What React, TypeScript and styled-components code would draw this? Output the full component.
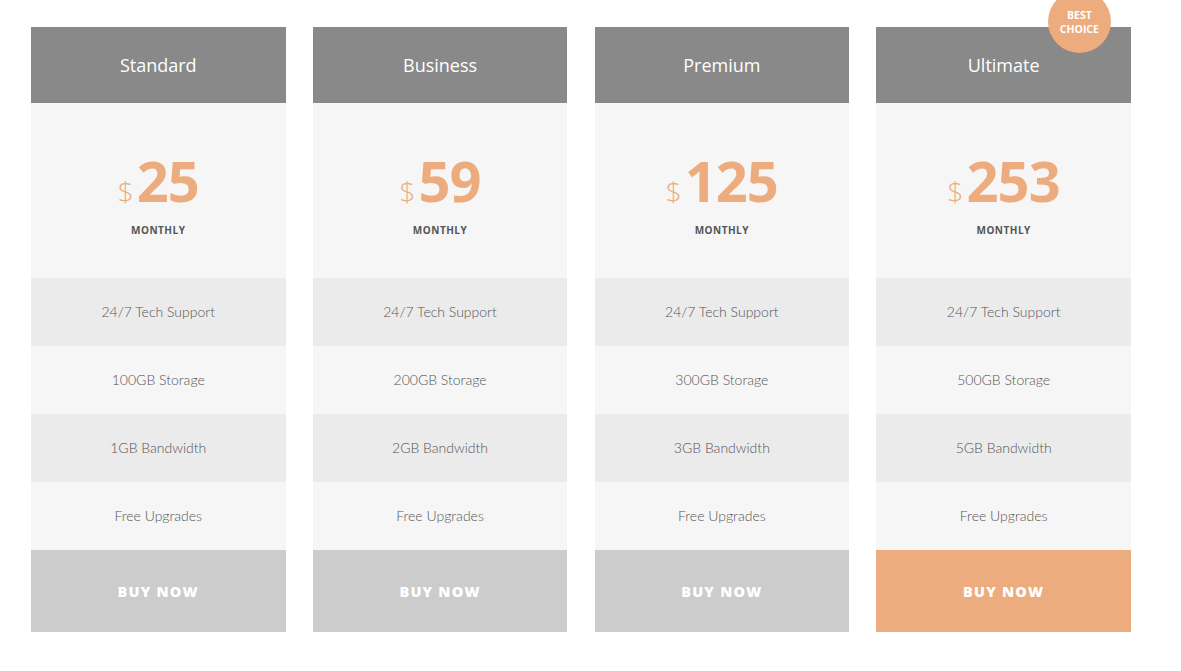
import React from "react";
import styled, { createGlobalStyle } from "styled-components";

const Global = createGlobalStyle`
  html, body { margin: 0; padding: 0; background: #ffffff; }
  body { font-family: "Open Sans", "Liberation Sans", sans-serif; }
`;

const Page = styled.div`
  padding: 27px 0 0 31px;
`;

const Grid = styled.div`
  display: grid;
  grid-template-columns: repeat(4, 254.5px);
  column-gap: 27.3px;
  width: 1100px;
`;

const Card = styled.div`
  position: relative;
  display: flex;
  flex-direction: column;
`;

const Header = styled.div`
  height: 76px;
  background: #898989;
  color: #ffffff;
  display: flex;
  align-items: center;
  justify-content: center;
  font-family: "Open Sans", sans-serif;
  font-size: 18px;
  font-weight: 400;
`;

const Badge = styled.div`
  position: absolute;
  top: -37px;
  right: 20px;
  width: 63px;
  height: 63px;
  border-radius: 50%;
  background: #ecac7e;
  color: #ffffff;
  display: flex;
  align-items: center;
  justify-content: center;
  text-align: center;
  font-family: "Open Sans", sans-serif;
  font-weight: 700;
  font-size: 10.5px;
  line-height: 14px;
  padding-top: 1px;
  box-sizing: border-box;
`;

const PriceBox = styled.div`
  height: 175px;
  background: #f6f6f6;
  display: flex;
  flex-direction: column;
  align-items: center;
  justify-content: center;
  padding-top: 4px;
  box-sizing: border-box;
`;

const Price = styled.div`
  display: flex;
  align-items: baseline;
  color: #ecac7e;
  height: 62px;
`;

const Dollar = styled.span`
  font-family: "Open Sans", sans-serif;
  font-weight: 300;
  font-size: 28px;
  margin-right: 3px;
`;

const Amount = styled.span`
  font-family: "Open Sans", sans-serif;
  font-weight: 700;
  font-size: 56px;
  letter-spacing: -1px;
  line-height: 62px;
`;

const Period = styled.div`
  margin-top: 12px;
  font-family: "Open Sans", sans-serif;
  font-weight: 700;
  font-size: 10px;
  letter-spacing: 0.5px;
  color: #555555;
`;

const Feature = styled.div<{ $alt: boolean }>`
  height: 68px;
  background: ${(p) => (p.$alt ? "#ebebeb" : "#f6f6f6")};
  display: flex;
  align-items: center;
  justify-content: center;
  padding-bottom: 2px;
  box-sizing: border-box;
  font-family: "Lato", sans-serif;
  font-weight: 300;
  font-size: 14px;
  color: #555555;
`;

const Button = styled.div<{ $active: boolean }>`
  height: 82px;
  background: ${(p) => (p.$active ? "#ecac7e" : "#cccccc")};
  color: #ffffff;
  display: flex;
  align-items: center;
  justify-content: center;
  font-family: "Open Sans", "Liberation Sans", sans-serif;
  font-weight: 800;
  font-size: 14.5px;
  letter-spacing: 1.2px;
`;

const plans = [
  { name: "Standard", price: "25", storage: "100GB", bw: "1GB" },
  { name: "Business", price: "59", storage: "200GB", bw: "2GB" },
  { name: "Premium", price: "125", storage: "300GB", bw: "3GB" },
  { name: "Ultimate", price: "253", storage: "500GB", bw: "5GB", best: true },
];

export default function App() {
  return (
    <>
      <Global />
      <Page>
        <Grid>
          {plans.map((p) => {
            const features = [
              "24/7 Tech Support",
              `${p.storage} Storage`,
              `${p.bw} Bandwidth`,
              "Free Upgrades",
            ];
            return (
              <Card key={p.name}>
                <Header>{p.name}</Header>
                {p.best && (
                  <Badge>
                    BEST
                    <br />
                    CHOICE
                  </Badge>
                )}
                <PriceBox>
                  <Price>
                    <Dollar>$</Dollar>
                    <Amount>{p.price}</Amount>
                  </Price>
                  <Period>MONTHLY</Period>
                </PriceBox>
                {features.map((f, i) => (
                  <Feature key={f} $alt={i % 2 === 0}>
                    {f}
                  </Feature>
                ))}
                <Button $active={!!p.best}>BUY NOW</Button>
              </Card>
            );
          })}
        </Grid>
      </Page>
    </>
  );
}
